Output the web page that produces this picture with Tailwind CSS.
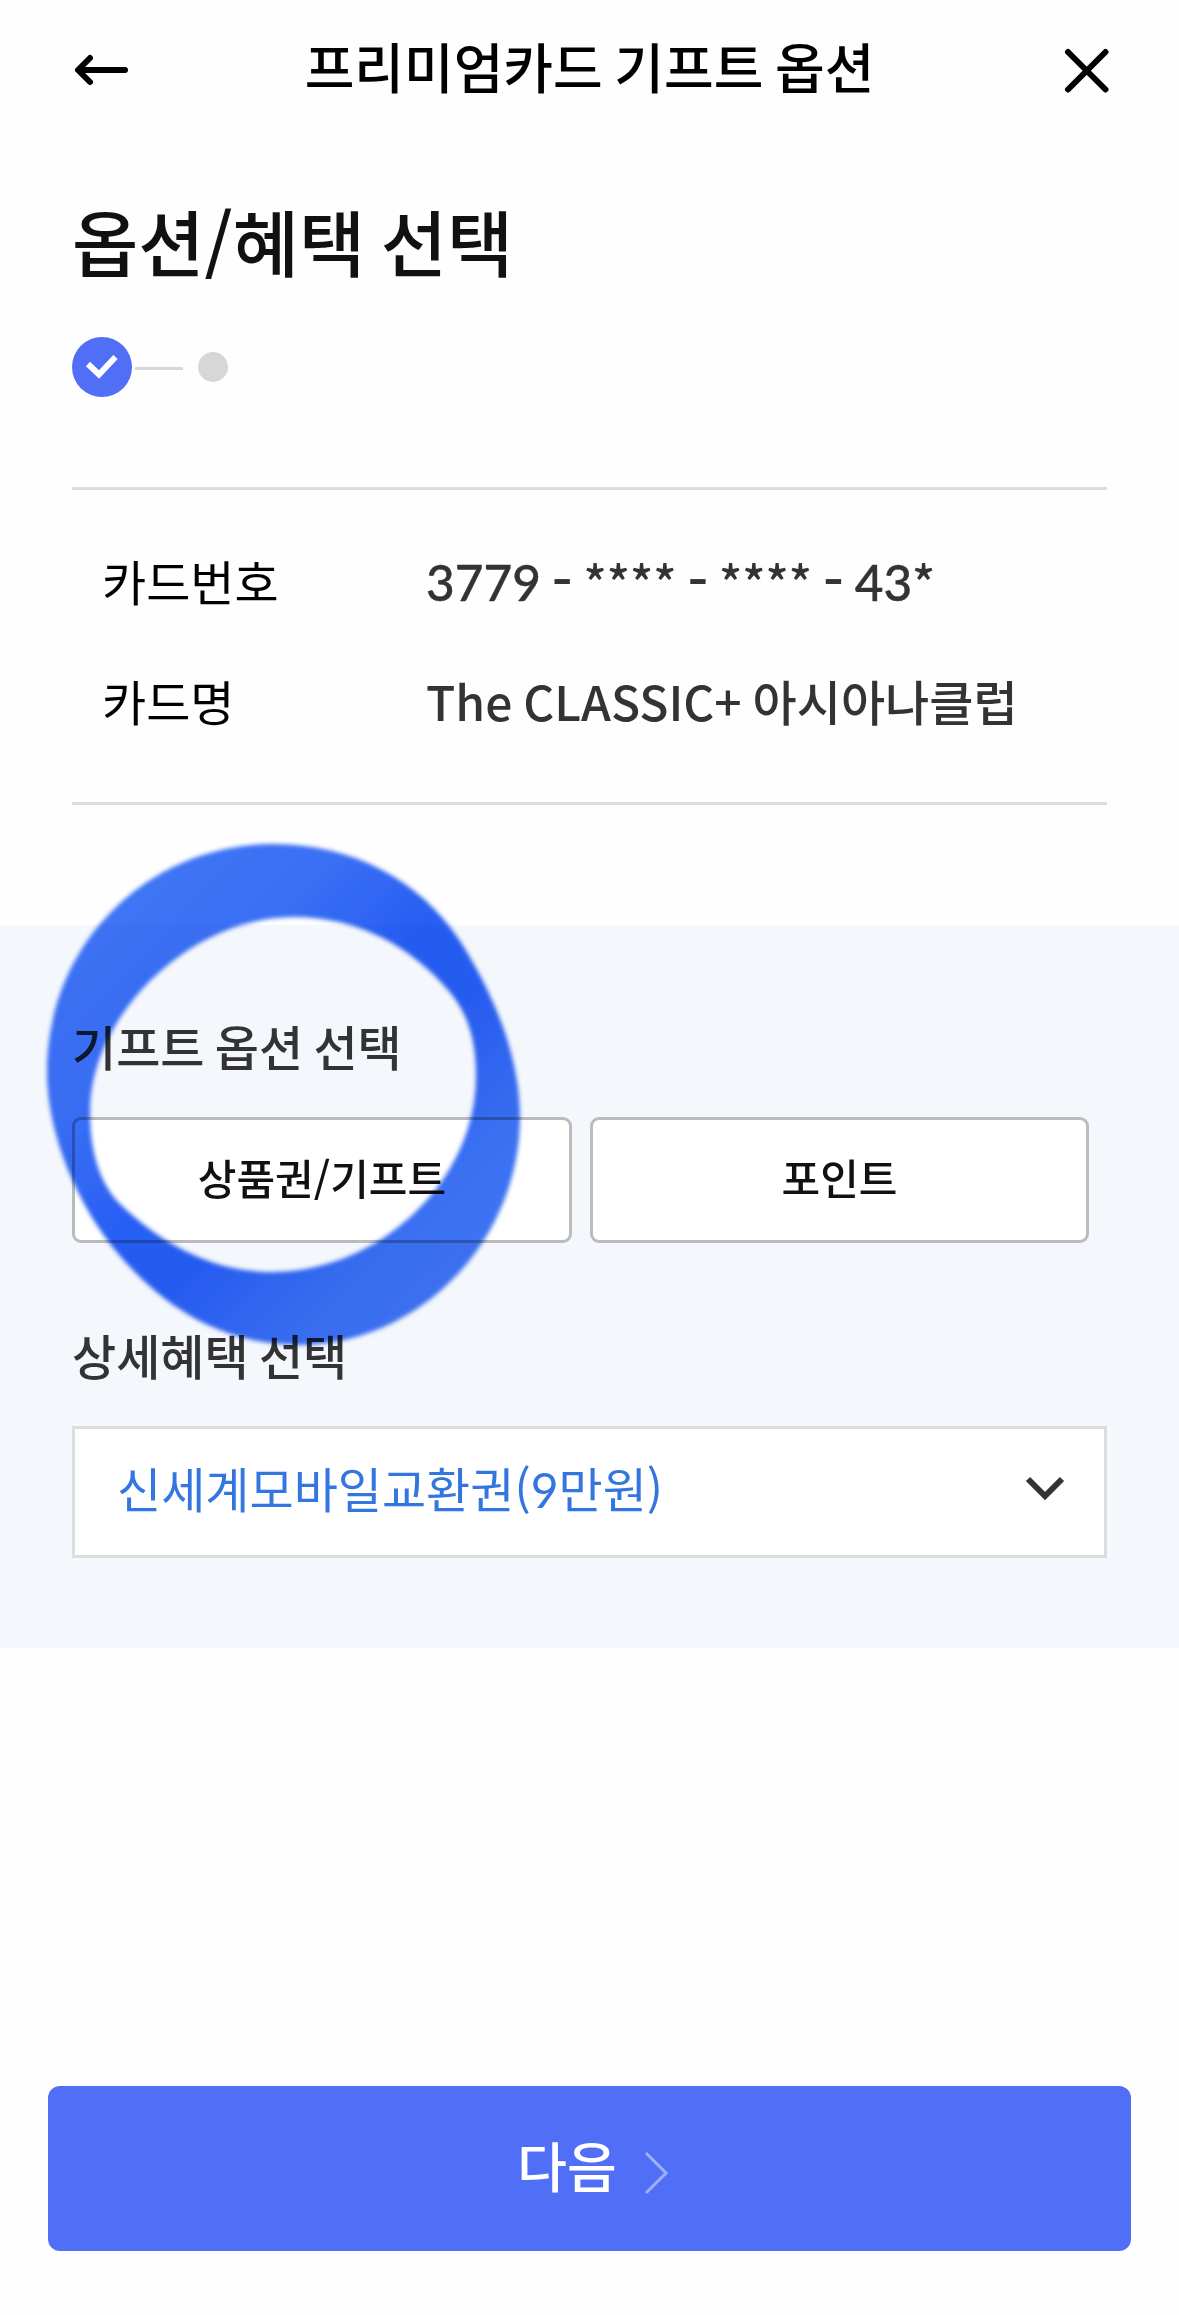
<!DOCTYPE html>
<html lang="ko">
<head>
  <meta charset="UTF-8" />
  <meta name="viewport" content="width=device-width, initial-scale=1" />
  <title>프리미엄카드 기프트 옵션</title>
  <script src="https://cdn.jsdelivr.net/npm/@tailwindcss/browser@4"></script>
  <style>
    body {
      font-family: 'Noto Sans CJK KR', sans-serif;
    }
    h1, h2, h3 {
      word-spacing: -0.065em;
    }
    .num {
      font-family: 'Lato', 'Noto Sans CJK KR', sans-serif;
    }
  </style>
</head>
<body class="bg-[#fefefe] h-[2315px] flex flex-col overflow-hidden">
  <header class="h-[140px] pl-[72px] pr-[69px] flex justify-between items-center">
    <button aria-label="뒤로">
      <svg class="w-[60px] h-[40px]" viewBox="0 0 60 40" fill="none" stroke="#000" stroke-width="6" stroke-linecap="round" stroke-linejoin="round">
        <path d="M53 20H7M18 8L6 20l12 12" />
      </svg>
    </button>
    <h1 class="text-[54px] leading-[80px] font-medium text-black whitespace-nowrap -mt-2">프리미엄카드 기프트 옵션</h1>
    <button class="w-[63px] flex justify-end" aria-label="닫기">
      <svg class="w-[46px] h-[46px]" viewBox="0 0 46 46" fill="none" stroke="#000" stroke-width="6" stroke-linecap="round">
        <path d="M4 5l37.500 37.500M41.500 5L4 42.500" />
      </svg>
    </button>
  </header>

  <main class="flex flex-col">
    <section class="px-[72px] pt-[50px]">
      <h2 class="text-[72px] leading-[100px] font-medium text-[#111]">옵션/혜택 선택</h2>
      <div class="flex items-center mt-[47px]">
        <span class="size-[60px] rounded-full bg-[#506ff6] flex items-center justify-center">
          <svg class="size-[60px]" viewBox="0 0 60 60" fill="none" stroke="#fff" stroke-width="6">
            <path d="M16 27l11 10.500L43.500 20" />
          </svg>
        </span>
        <span class="w-[48px] h-[3px] bg-[#d7d7d7] ml-[3px] mt-[3px]"></span>
        <span class="size-[30px] rounded-full bg-[#d7d7d7] ml-[15px]"></span>
      </div>

      <dl class="mt-[90px] h-[318px] border-y-3 border-[#ddd] pl-[30px] pt-[30px] grid grid-cols-[324px_1fr] auto-rows-[120px] text-[48px] leading-[120px] whitespace-nowrap">
        <dt class="text-black">카드번호</dt>
        <dd class="font-medium text-[#333] [word-spacing:-2.5px]"><span class="num text-[49.500px] leading-none [-webkit-text-stroke:0.4px_#333]">3779</span> <span class="text-[58px] leading-none align-[-3px]">-</span> **** <span class="text-[58px] leading-none align-[-3px]">-</span> **** <span class="text-[58px] leading-none align-[-3px]">-</span> <span class="num text-[49.500px] leading-none [-webkit-text-stroke:0.4px_#333]">43</span>*</dd>
        <dt class="text-black">카드명</dt>
        <dd class="font-medium text-[#333] [word-spacing:-2.5px]">The CLASSIC+ 아시아나클럽</dd>
      </dl>
    </section>

    <section class="relative bg-[#f4f7fc] mt-[120px] h-[723px] px-[72px] pt-[85px]">
      <h3 class="text-[48px] leading-[70px] font-medium text-[#333]">기프트 옵션 선택</h3>
      <div class="flex gap-[18px] mt-[37px]">
        <button class="w-[500px] h-[126px] pb-[7px] bg-white border-3 border-[#bbb] rounded-[9px] text-[42px] font-medium text-[#111]">상품권/기프트</button>
        <button class="w-[499px] h-[126px] pb-[7px] bg-white border-3 border-[#bbb] rounded-[9px] text-[42px] font-medium text-[#111]">포인트</button>
      </div>
      <h3 class="text-[48px] leading-[70px] font-medium text-[#333] mt-[76px]">상세혜택 선택</h3>
      <div class="mt-[37px] h-[132px] bg-white border-3 border-[#ddd] pl-[42px] pr-[36px] pb-[8px] flex items-center justify-between">
        <span class="-mt-[2px] text-[48px] leading-[70px] text-[#3476e0]">신세계모바일교환권(<span class="num leading-none">9</span>만원)</span>
        <svg class="w-[46px] h-[30px]" viewBox="0 0 46 30" fill="none" stroke="#333" stroke-width="6">
          <path d="M6 6l17 17L40 6" />
        </svg>
      </div>

      <!-- marker circle around the first option -->
      <svg class="absolute left-[20px] -top-[105px] w-[580px] h-[560px] mix-blend-multiply pointer-events-none" viewBox="0 0 580 560">
        <defs>
          <linearGradient id="ink" gradientUnits="userSpaceOnUse" x1="100" y1="100" x2="450" y2="450">
            <stop offset="0" stop-color="#3d74f5" />
            <stop offset="0.2" stop-color="#3a70f5" />
            <stop offset="0.45" stop-color="#275ef3" />
            <stop offset="0.6" stop-color="#275ef3" />
            <stop offset="0.85" stop-color="#3a70f2" />
            <stop offset="1" stop-color="#3d74f2" />
          </linearGradient>
          <filter id="soft">
            <feGaussianBlur stdDeviation="2" />
          </filter>
        </defs>
        <path fill="url(#ink)" fill-rule="evenodd" filter="url(#soft)" d="M253 24C333 24 400 60 440 121C468 165 500 230 500 297C500 420 400 525 279 525C210 525 150 494 100 436C58 387 27 315 27 252C27 122 130 24 253 24Z M274 97C340 97 392 128 428 170C448 193 456 220 456 256C456 360 360 452 252 452C190 452 139 422 98 382C78 360 70 328 70 292C70 195 170 97 274 97Z" />
      </svg>
    </section>
  </main>

  <footer class="mt-auto px-12 pb-16">
    <button class="w-full h-[165px] pl-[8px] bg-[#506ff6] rounded-[12px] flex items-center justify-center gap-[27px] text-white text-[54px] font-medium">
      <span class="-mt-[8px]">다음</span>
      <svg class="w-[26px] h-[46px] mt-[9px]" viewBox="0 0 26 46" fill="none" stroke="#fff" stroke-opacity="0.45" stroke-width="3">
        <path d="M2 3l20 20L2 43" />
      </svg>
    </button>
  </footer>
</body>
</html>
